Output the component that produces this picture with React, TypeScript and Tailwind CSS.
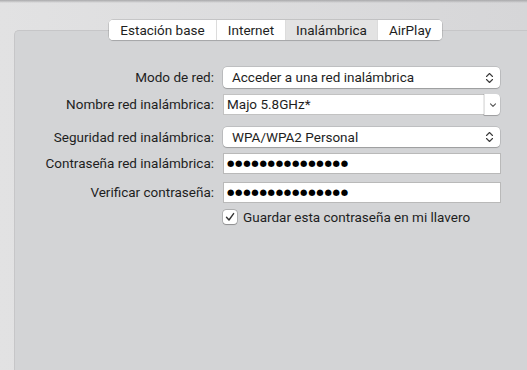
import React from "react";

const tabs = ["Estación base", "Internet", "Inalámbrica", "AirPlay"];
const tabWidths = ["w-[107px]", "w-[69px]", "w-[92px]", "w-[65px]"];

export default function App() {
  return (
    <div
      className="relative flex h-[370px] w-[527px] flex-col overflow-hidden bg-gradient-to-r from-[#e2e2e3] to-[#d6d6d8] text-[13.5px] text-[#1e1e1e]"
      style={{ fontFamily: "Roboto, 'Liberation Sans', sans-serif" }}
    >
      {/* toolbar edge */}
      <div className="h-[3px] bg-gradient-to-b from-[#a9a9ab] to-transparent" />

      {/* segmented tabs */}
      <div className="relative z-10 mt-[17px] flex pl-[109px]">
        <div className="flex h-[20px] overflow-hidden rounded-[4px] bg-white shadow-[0_0_0_0.5px_rgba(0,0,0,0.22),0_1px_1px_rgba(0,0,0,0.12)]">
          {tabs.map((t, i) => (
            <div
              key={t}
              className={`flex items-center justify-center ${tabWidths[i]} ${i > 0 ? "border-l border-[#dcdcdc]" : ""} ${t === "Inalámbrica" ? "bg-[#e3e3e3]" : "bg-white"}`}
            >
              {t}
            </div>
          ))}
        </div>
      </div>

      {/* tab panel */}
      <div className="ml-[14px] -mt-[10px] flex-1 rounded-tl-[5px] border-l border-t border-[#c6c6c8] bg-[#d3d4d6] pt-[26px]">
        <Row label="Modo de red:" className="mt-[10px] h-[21px]">
          <Popup value="Acceder a una red inalámbrica" />
        </Row>
        <Row label="Nombre red inalámbrica:" className="mt-[6px] h-[21px]">
          <Combo value="Majo 5.8GHz*" />
        </Row>
        <Row label="Seguridad red inalámbrica:" className="mt-[12px] h-[20px]">
          <Popup value="WPA/WPA2 Personal" />
        </Row>
        <Row label="Contraseña red inalámbrica:" className="mt-[6px] h-[21px]">
          <Secure />
        </Row>
        <Row label="Verificar contraseña:" className="mt-[8px] h-[21px]">
          <Secure />
        </Row>
        <div className="mt-[6px] flex h-[16px] items-center pl-[208px]">
          <div className="flex h-[14px] w-[14px] items-center justify-center rounded-[3px] bg-white shadow-[0_0_0_0.5px_rgba(0,0,0,0.3),0_0.5px_1px_rgba(0,0,0,0.2)]">
            <svg width="10" height="10" viewBox="0 0 10 10" fill="none">
              <path d="M1.5 5.2 L4 8 L8.6 1.6" stroke="#333" strokeWidth="1.4" strokeLinecap="round" strokeLinejoin="round" />
            </svg>
          </div>
          <span className="ml-[6px]">Guardar esta contraseña en mi llavero</span>
        </div>
      </div>
    </div>
  );
}

function Row({ label, className, children }: { label: string; className: string; children: React.ReactNode }) {
  return (
    <div className={`flex items-center ${className}`}>
      <div className="w-[200px] pr-[1px] text-right">{label}</div>
      <div className="ml-[8px] h-full w-[277px]">{children}</div>
    </div>
  );
}

function Popup({ value }: { value: string }) {
  return (
    <div className="flex h-full items-center rounded-[4px] bg-white pl-[9px] pr-[6px] shadow-[0_0_0_0.5px_rgba(0,0,0,0.2),0_1px_1px_rgba(0,0,0,0.18)]">
      <span className="flex-1">{value}</span>
      <svg width="9" height="12" viewBox="0 0 9 12" fill="none">
        <path d="M1.5 4.5 L4.5 1.5 L7.5 4.5 M1.5 7.5 L4.5 10.5 L7.5 7.5" stroke="#3a3a3a" strokeWidth="1.1" strokeLinecap="round" strokeLinejoin="round" />
      </svg>
    </div>
  );
}

function Combo({ value }: { value: string }) {
  return (
    <div className="flex h-full">
      <div className="flex flex-1 items-center border border-[#c2c2c2] border-r-0 bg-white pl-[3px]">{value}</div>
      <div className="flex w-[16px] items-center justify-center rounded-r-[4px] border-l border-[#e4e4e4] bg-white shadow-[0_0.5px_0_0.5px_rgba(0,0,0,0.15),0_1px_1px_rgba(0,0,0,0.12)]">
        <svg width="8" height="6" viewBox="0 0 8 6" fill="none">
          <path d="M1.5 1.8 L4 4.3 L6.5 1.8" stroke="#555" strokeWidth="1.1" strokeLinecap="round" strokeLinejoin="round" />
        </svg>
      </div>
    </div>
  );
}

function Secure() {
  return (
    <div className="flex h-full w-[278px] items-center overflow-hidden border border-[#b9b9b9] bg-white pl-[3px]">
      <span
        className="leading-none tracking-[0.7px] text-black"
        style={{ fontFamily: "'DejaVu Sans', sans-serif", fontSize: "8.5px" }}
      >
        ●●●●●●●●●●●●●●●
      </span>
    </div>
  );
}
